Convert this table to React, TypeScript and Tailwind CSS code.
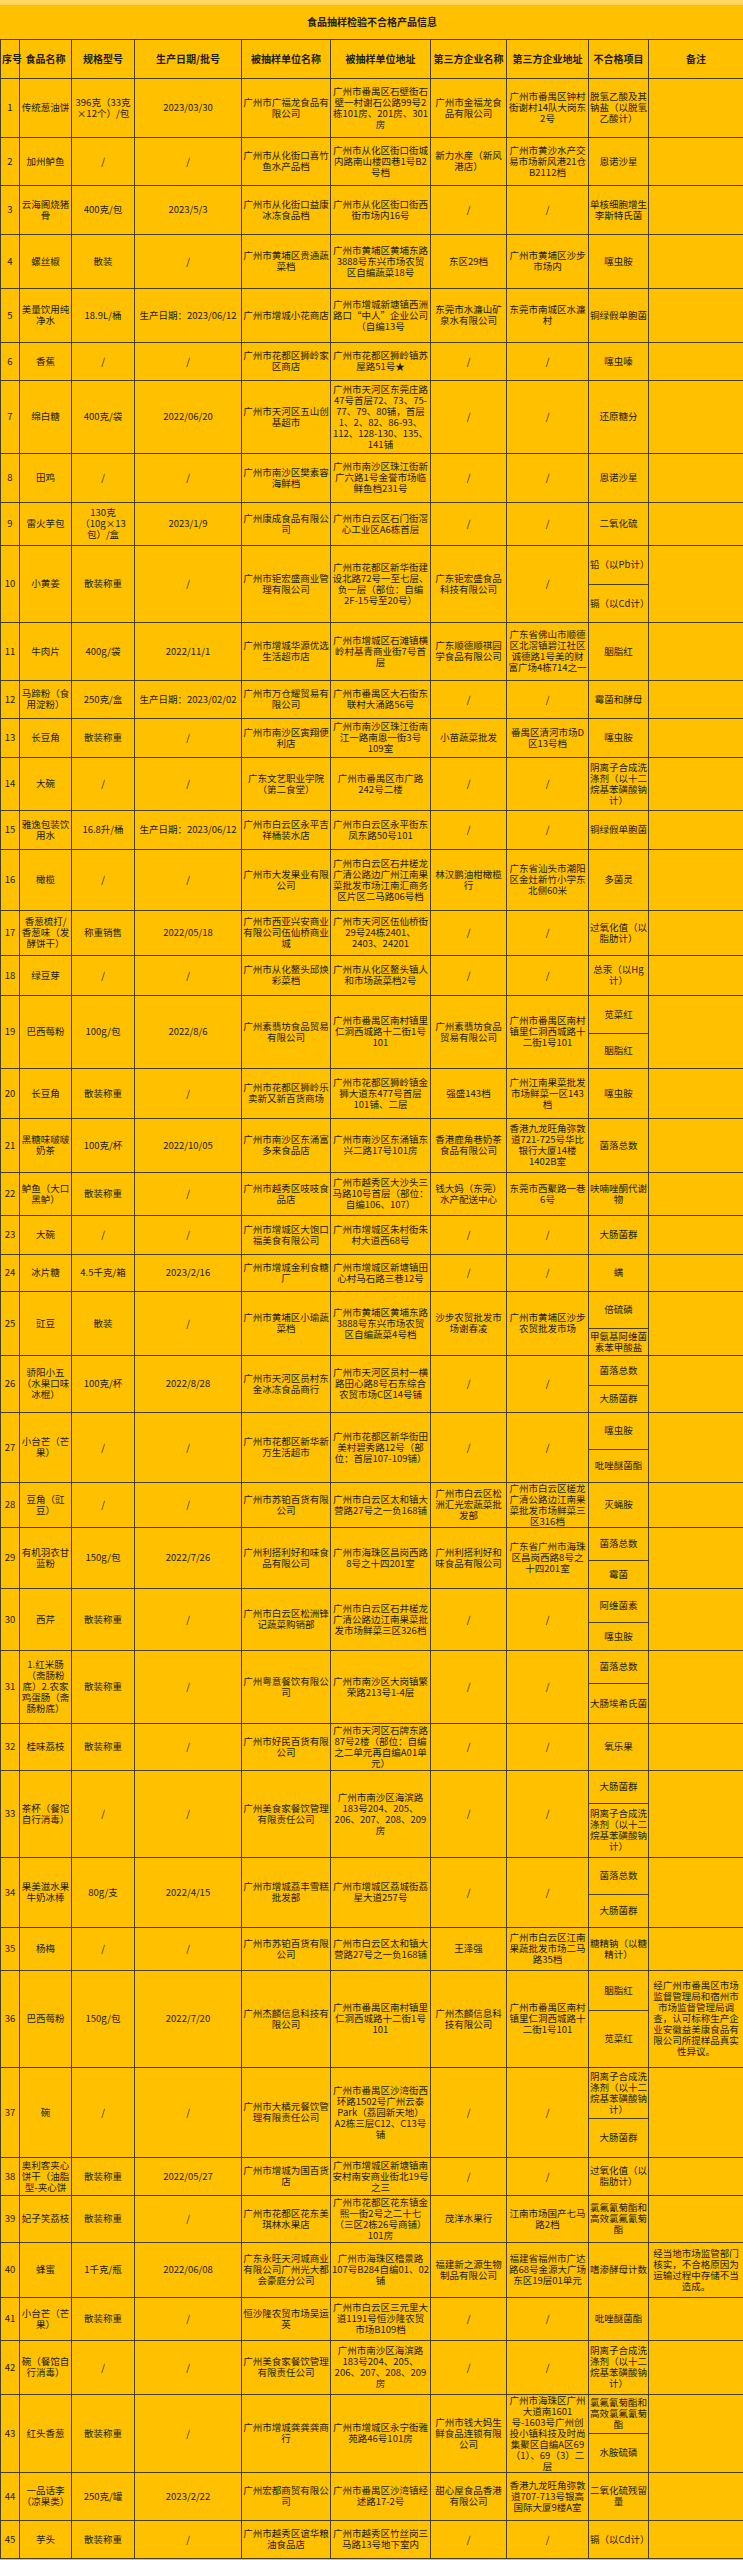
type Row = {
  no: number;
  name: string;
  spec: string;
  date: string;
  unit: string;
  addr: string;
  tp: string;
  tpAddr: string;
  items: string[];
  h: string[];
  note?: string;
};

const rows: Row[] = [
  { no: 1, name: "传统葱油饼", spec: "396克（33克×12个）/包", date: "2023/03/30", unit: "广州市广福龙食品有限公司", addr: "广州市番禺区石壁街石壁一村谢石公路99号2栋101房、201房、301房", tp: "广州市金福龙食品有限公司", tpAddr: "广州市番禺区钟村街谢村14队大岗东2号", items: ["脱氢乙酸及其钠盐（以脱氢乙酸计）"], h: ["h-[59px]"] },
  { no: 2, name: "加州鲈鱼", spec: "/", date: "/", unit: "广州市从化街口喜竹鱼水产品档", addr: "广州市从化区街口街城内路南山楼四巷1号B2号档", tp: "新力水産（新风港店）", tpAddr: "广州市黄沙水产交易市场新风港21仓B2112档", items: ["恩诺沙星"], h: ["h-[48px]"] },
  { no: 3, name: "云海阁烧猪骨", spec: "400克/包", date: "2023/5/3", unit: "广州市从化街口益康冰冻食品档", addr: "广州市从化区街口街西街市场内16号", tp: "/", tpAddr: "/", items: ["单核细胞增生李斯特氏菌"], h: ["h-[49px]"] },
  { no: 4, name: "螺丝椒", spec: "散装", date: "/", unit: "广州市黄埔区贵通蔬菜档", addr: "广州市黄埔区黄埔东路3888号东兴市场农贸区自编蔬菜18号", tp: "东区29档", tpAddr: "广州市黄埔区沙步市场内", items: ["噻虫胺"], h: ["h-[54px]"] },
  { no: 5, name: "美量饮用纯净水", spec: "18.9L/桶", date: "生产日期：2023/06/12", unit: "广州市增城小花商店", addr: "广州市增城新塘镇西洲路口“中人”企业公司（自编13号", tp: "东莞市水濂山矿泉水有限公司", tpAddr: "东莞市南城区水濂村", items: ["铜绿假单胞菌"], h: ["h-[54px]"] },
  { no: 6, name: "香蕉", spec: "/", date: "/", unit: "广州市花都区狮岭家区商店", addr: "广州市花都区狮岭镇苏屋路51号★", tp: "/", tpAddr: "/", items: ["噻虫嗪"], h: ["h-[38px]"] },
  { no: 7, name: "绵白糖", spec: "400克/袋", date: "2022/06/20", unit: "广州市天河区五山创基超市", addr: "广州市天河区东莞庄路47号首层72、73、75-77、79、80铺，首层1、2、82、86-93、112、128-130、135、141铺", tp: "/", tpAddr: "/", items: ["还原糖分"], h: ["h-[73px]"] },
  { no: 8, name: "田鸡", spec: "/", date: "/", unit: "广州市南沙区樊素容海鲜档", addr: "广州市南沙区珠江街新广六路1号金誉市场临鲜鱼档231号", tp: "/", tpAddr: "/", items: ["恩诺沙星"], h: ["h-[49px]"] },
  { no: 9, name: "雷火芋包", spec: "130克（10g×13包）/盒", date: "2023/1/9", unit: "广州康成食品有限公司", addr: "广州市白云区石门街滘心工业区A6栋首层", tp: "/", tpAddr: "/", items: ["二氧化硫"], h: ["h-[43px]"] },
  { no: 10, name: "小黄姜", spec: "散装称重", date: "/", unit: "广州市钜宏盛商业管理有限公司", addr: "广州市花都区新华街建设北路72号一至七层、负一层（部位：自编2F-15号至20号）", tp: "广东钜宏盛食品科技有限公司", tpAddr: "/", items: ["铅（以Pb计）", "镉（以Cd计）"], h: ["h-[39px]", "h-[38px]"] },
  { no: 11, name: "牛肉片", spec: "400g/袋", date: "2022/11/1", unit: "广州市增城华源优选生活超市店", addr: "广州市增城区石滩镇横岭村基青商业街7号首层", tp: "广东顺德顺祺园学食品有限公司", tpAddr: "广东省佛山市顺德区北滘镇碧江社区诚德路1号美的财富广场4栋714之一", items: ["胭脂红"], h: ["h-[58px]"] },
  { no: 12, name: "马蹄粉（食用淀粉）", spec: "250克/盒", date: "生产日期：2023/02/02", unit: "广州市万仓耀贸易有限公司", addr: "广州市番禺区大石街东联村大涌路56号", tp: "/", tpAddr: "/", items: ["霉菌和酵母"], h: ["h-[38px]"] },
  { no: 13, name: "长豆角", spec: "散装称重", date: "/", unit: "广州市南沙区寅翔便利店", addr: "广州市南沙区珠江街南江一路南恩一街3号109室", tp: "小苗蔬菜批发", tpAddr: "番禺区清河市场D区13号档", items: ["噻虫胺"], h: ["h-[39px]"] },
  { no: 14, name: "大碗", spec: "/", date: "/", unit: "广东文艺职业学院（第二食堂）", addr: "广州市番禺区市广路242号二楼", tp: "/", tpAddr: "/", items: ["阴离子合成洗涤剂（以十二烷基苯磺酸钠计）"], h: ["h-[53px]"] },
  { no: 15, name: "雅逸包装饮用水", spec: "16.8升/桶", date: "生产日期：2023/06/12", unit: "广州市白云区永平吉祥桶装水店", addr: "广州市白云区永平街东凤东路50号101", tp: "/", tpAddr: "/", items: ["铜绿假单胞菌"], h: ["h-[39px]"] },
  { no: 16, name: "橄榄", spec: "/", date: "/", unit: "广州市大发果业有限公司", addr: "广州市白云区石井槎龙广清公路边广州江南果菜批发市场江南汇商务区片区二马路06号档", tp: "林汉鹏油柑橄榄行", tpAddr: "广东省汕头市潮阳区金灶新竹小学东北侧60米", items: ["多菌灵"], h: ["h-[61px]"] },
  { no: 17, name: "香葱梳打/香葱味（发酵饼干）", spec: "称重销售", date: "2022/05/18", unit: "广州市西亚兴安商业有限公司伍仙桥商业城", addr: "广州市天河区伍仙桥街29号24栋2401、2403、24201", tp: "/", tpAddr: "/", items: ["过氧化值（以脂肪计）"], h: ["h-[45px]"] },
  { no: 18, name: "绿豆芽", spec: "/", date: "/", unit: "广州市从化鳌头邱焕彩菜档", addr: "广州市从化区鳌头镇人和市场蔬菜档2号", tp: "/", tpAddr: "/", items: ["总汞（以Hg计）"], h: ["h-[40px]"] },
  { no: 19, name: "巴西莓粉", spec: "100g/包", date: "2022/8/6", unit: "广州素翡坊食品贸易有限公司", addr: "广州市番禺区南村镇里仁洞西城路十二街1号101", tp: "广州素翡坊食品贸易有限公司", tpAddr: "广州市番禺区南村镇里仁洞西城路十二街1号101", items: ["苋菜红", "胭脂红"], h: ["h-[38px]", "h-[35px]"] },
  { no: 20, name: "长豆角", spec: "散装称重", date: "/", unit: "广州市花都区狮岭乐卖新又新百货商场", addr: "广州市花都区狮岭镇金狮大道东477号首层101铺、二层", tp: "强盛143档", tpAddr: "广州江南果菜批发市场鲜菜一区143档", items: ["噻虫胺"], h: ["h-[50px]"] },
  { no: 21, name: "黑糖味啵啵奶茶", spec: "100克/杯", date: "2022/10/05", unit: "广州市南沙区东涌富多来食品店", addr: "广州市南沙区东涌镇东兴二路17号101房", tp: "香港鹿角巷奶茶食品有限公司", tpAddr: "香港九龙旺角弥敦道721-725号华比银行大厦14楼1402B室", items: ["菌落总数"], h: ["h-[54px]"] },
  { no: 22, name: "鲈鱼（大口黑鲈）", spec: "散装称重", date: "/", unit: "广州市越秀区吱吱食品店", addr: "广州市越秀区大沙头三马路10号首层（部位：自编106、107）", tp: "钱大妈（东莞）水产配送中心", tpAddr: "东莞市西聚路一巷6号", items: ["呋喃唑酮代谢物"], h: ["h-[43px]"] },
  { no: 23, name: "大碗", spec: "/", date: "/", unit: "广州市增城区大饱口福美食有限公司", addr: "广州市增城区朱村街朱村大道西68号", tp: "/", tpAddr: "/", items: ["大肠菌群"], h: ["h-[39px]"] },
  { no: 24, name: "冰片糖", spec: "4.5千克/箱", date: "2023/2/16", unit: "广州市增城金利食糖厂", addr: "广州市增城区新塘镇田心村马石路三巷12号", tp: "/", tpAddr: "/", items: ["螨"], h: ["h-[37px]"] },
  { no: 25, name: "豇豆", spec: "散装", date: "/", unit: "广州市黄埔区小瑜蔬菜档", addr: "广州市黄埔区黄埔东路3888号东兴市场农贸区自编蔬菜4号档", tp: "沙步农贸批发市场谢春凌", tpAddr: "广州市黄埔区沙步农贸批发市场", items: ["倍硫磷", "甲氨基阿维菌素苯甲酸盐"], h: ["h-[37px]", "h-[27px]"] },
  { no: 26, name: "骄阳小五（水果口味冰棍）", spec: "100克/杯", date: "2022/8/28", unit: "广州市天河区员村东金冰冻食品商行", addr: "广州市天河区员村一横路田心路8号石东综合农贸市场C区14号铺", tp: "/", tpAddr: "/", items: ["菌落总数", "大肠菌群"], h: ["h-[30px]", "h-[27px]"] },
  { no: 27, name: "小台芒（芒果）", spec: "/", date: "/", unit: "广州市花都区新华新万生活超市", addr: "广州市花都区新华街田美村碧秀路12号（部位：首层107-109铺）", tp: "/", tpAddr: "/", items: ["噻虫胺", "吡唑醚菌酯"], h: ["h-[37px]", "h-[33px]"] },
  { no: 28, name: "豆角（豇豆）", spec: "/", date: "/", unit: "广州市苏铂百货有限公司", addr: "广州市白云区太和镇大营路27号之一负168铺", tp: "广州市白云区松洲汇光宏蔬菜批发部", tpAddr: "广州市白云区槎龙广清公路边江南果菜批发市场鲜菜三区316档", items: ["灭蝇胺"], h: ["h-[45px]"] },
  { no: 29, name: "有机羽衣甘蓝粉", spec: "150g/包", date: "2022/7/26", unit: "广州利搭利好和味食品有限公司", addr: "广州市海珠区昌岗西路8号之十四201室", tp: "广州利搭利好和味食品有限公司", tpAddr: "广东省广州市海珠区昌岗西路8号之十四201室", items: ["菌落总数", "霉菌"], h: ["h-[33px]", "h-[28px]"] },
  { no: 30, name: "西芹", spec: "散装称重", date: "/", unit: "广州市白云区松洲锋记蔬菜购销部", addr: "广州市白云区石井槎龙广清公路边江南果菜批发市场鲜菜三区326档", tp: "/", tpAddr: "/", items: ["阿维菌素", "噻虫胺"], h: ["h-[34px]", "h-[28px]"] },
  { no: 31, name: "1.红米肠（斋肠粉底）2.农家鸡蛋肠（斋肠粉底）", spec: "散装称重", date: "/", unit: "广州粤意餐饮有限公司", addr: "广州市南沙区大岗镇繁荣路213号1-4层", tp: "/", tpAddr: "/", items: ["菌落总数", "大肠埃希氏菌"], h: ["h-[33px]", "h-[40px]"] },
  { no: 32, name: "桂味荔枝", spec: "散装称重", date: "/", unit: "广州市好民百货有限公司", addr: "广州市天河区石牌东路87号2楼（部位：自编之二单元再自编A01单元）", tp: "/", tpAddr: "/", items: ["氧乐果"], h: ["h-[47px]"] },
  { no: 33, name: "茶杯（餐馆自行消毒）", spec: "/", date: "/", unit: "广州美食家餐饮管理有限责任公司", addr: "广州市南沙区海滨路183号204、205、206、207、208、209房", tp: "/", tpAddr: "/", items: ["大肠菌群", "阴离子合成洗涤剂（以十二烷基苯磺酸钠计）"], h: ["h-[33px]", "h-[54px]"] },
  { no: 34, name: "果美滋水果牛奶冰棒", spec: "80g/支", date: "2022/4/15", unit: "广州市增城荔丰雪糕批发部", addr: "广州市增城区荔城街荔星大道257号", tp: "/", tpAddr: "/", items: ["菌落总数", "大肠菌群"], h: ["h-[37px]", "h-[33px]"] },
  { no: 35, name: "杨梅", spec: "/", date: "/", unit: "广州市苏铂百货有限公司", addr: "广州市白云区太和镇大营路27号之一负168铺", tp: "王泽强", tpAddr: "广州市白云区江南果蔬批发市场二马路35档", items: ["糖精钠（以糖精计）"], h: ["h-[43px]"] },
  { no: 36, name: "巴西莓粉", spec: "150g/包", date: "2022/7/20", unit: "广州杰麟信息科技有限公司", addr: "广州市番禺区南村镇里仁洞西城路十二街1号101", tp: "广州杰麟信息科技有限公司", tpAddr: "广州市番禺区南村镇里仁洞西城路十二街1号101", items: ["胭脂红", "苋菜红"], h: ["h-[40px]", "h-[57px]"], note: "经广州市番禺区市场监督管理局和宿州市市场监督管理局调查，认可标称生产企业安徽益美康食品有限公司所提样品真实性异议。" },
  { no: 37, name: "碗", spec: "/", date: "/", unit: "广州市大橘元餐饮管理有限责任公司", addr: "广州市番禺区沙湾街西环路1502号广州云泰Park（荔园新天地）A2栋三层C12、C13号铺", tp: "/", tpAddr: "/", items: ["阴离子合成洗涤剂（以十二烷基苯磺酸钠计）", "大肠菌群"], h: ["h-[51px]", "h-[39px]"] },
  { no: 38, name: "奥利客夹心饼干（油脂型-夹心饼", spec: "散装称重", date: "2022/05/27", unit: "广州市增城为国百货店", addr: "广州市增城区新塘镇南安村南安商业街北19号之三", tp: "/", tpAddr: "/", items: ["过氧化值（以脂肪计）"], h: ["h-[38px]"] },
  { no: 39, name: "妃子笑荔枝", spec: "散装称重", date: "/", unit: "广州市花都区花东美琪林水果店", addr: "广州市花都区花东镇金熙一街2号之二十七（三区2栋26号商铺）101房", tp: "茂洋水果行", tpAddr: "江南市场国产七马路2档", items: ["氯氟氰菊酯和高效氯氟氰菊酯"], h: ["h-[47px]"] },
  { no: 40, name: "蜂蜜", spec: "1千克/瓶", date: "2022/06/08", unit: "广东永旺天河城商业有限公司广州光大都会豪庭分公司", addr: "广州市海珠区稽景路107号B284自编01、02铺", tp: "福建新之源生物制品有限公司", tpAddr: "福建省福州市广达路68号金源大广场东区19层01单元", items: ["嗜渗酵母计数"], h: ["h-[55px]"], note: "经当地市场监管部门核实，不合格原因为运输过程中存储不当造成。" },
  { no: 41, name: "小台芒（芒果）", spec: "散装称重", date: "/", unit: "恒沙隆农贸市场吴运英", addr: "广州市白云区三元里大道1191号恒沙隆农贸市场B109档", tp: "/", tpAddr: "/", items: ["吡唑醚菌酯"], h: ["h-[43px]"] },
  { no: 42, name: "碗（餐馆自行消毒）", spec: "/", date: "/", unit: "广州美食家餐饮管理有限责任公司", addr: "广州市南沙区海滨路183号204、205、206、207、208、209房", tp: "/", tpAddr: "/", items: ["阴离子合成洗涤剂（以十二烷基苯磺酸钠计）"], h: ["h-[54px]"] },
  { no: 43, name: "红头香葱", spec: "散装称重", date: "/", unit: "广州市增城龚龚龚商行", addr: "广州市增城区永宁街雅苑路46号101房", tp: "广州市钱大妈生鲜食品连锁有限公司", tpAddr: "广州市海珠区广州大道南1601号-1603号广州创投小镇科技及时尚集聚区自编A区69（1）、69（3）二层", items: ["氯氟氰菊酯和高效氯氟氰菊酯", "水胺硫磷"], h: ["h-[39px]", "h-[38px]"] },
  { no: 44, name: "一品话李（凉果类）", spec: "250克/罐", date: "2023/2/22", unit: "广州宏都商贸有限公司", addr: "广州市番禺区沙湾镇经述路17-2号", tp: "甜心屋食品香港有限公司", tpAddr: "香港九龙旺角弥敦道707-713号银高国际大厦9楼A室", items: ["二氧化硫残留量"], h: ["h-[48px]"] },
  { no: 45, name: "芋头", spec: "散装称重", date: "/", unit: "广州市越秀区谊华粮油食品店", addr: "广州市越秀区竹丝岗三马路13号地下室内", tp: "/", tpAddr: "/", items: ["镉（以Cd计）"], h: ["h-[38px]"] },
];

const headers = ["序号", "食品名称", "规格型号", "生产日期/批号", "被抽样单位名称", "被抽样单位地址", "第三方企业名称", "第三方企业地址", "不合格项目", "备注"];

const cell = "border border-[#4a3f1c] px-px text-center align-middle";

function TableRow({ row }: { row: Row }) {
  const span = row.items.length;
  return (
    <>
      <tr className={row.h[0]}>
        <td rowSpan={span} className={cell}>{row.no}</td>
        <td rowSpan={span} className={cell}>{row.name}</td>
        <td rowSpan={span} className={cell}>{row.spec}</td>
        <td rowSpan={span} className={cell}>{row.date}</td>
        <td rowSpan={span} className={cell}>{row.unit}</td>
        <td rowSpan={span} className={cell}>{row.addr}</td>
        <td rowSpan={span} className={cell}>{row.tp}</td>
        <td rowSpan={span} className={cell}>{row.tpAddr}</td>
        <td className={cell}>{row.items[0]}</td>
        <td rowSpan={span} className={cell}>{row.note}</td>
      </tr>
      {row.items.slice(1).map((item, i) => (
        <tr key={item} className={row.h[i + 1]}>
          <td className={cell}>{item}</td>
        </tr>
      ))}
    </>
  );
}

export default function App() {
  return (
    <div className="w-[743px] min-h-[2560px] bg-[#FFC000] text-[#221c0c] [font-family:'Noto_Sans_CJK_SC','Noto_Sans',sans-serif]">
      {/* light strip above the sheet */}
      <div className="h-[5px] bg-[#FFD75E]" />

      <table className="w-[743px] table-fixed border-collapse text-[9.5px] leading-[11px]">
        <colgroup>
          <col className="w-[19px]" />
          <col className="w-[52px]" />
          <col className="w-[63px]" />
          <col className="w-[107px]" />
          <col className="w-[89px]" />
          <col className="w-[100px]" />
          <col className="w-[76px]" />
          <col className="w-[82px]" />
          <col className="w-[60px]" />
          <col className="w-[95px]" />
        </colgroup>
        <thead>
          {/* Title */}
          <tr className="h-[34px]">
            <th colSpan={10} className="border-b border-[#4a3f1c] text-center text-[10px] font-bold">
              食品抽样检验不合格产品信息
            </th>
          </tr>
          {/* Column headers */}
          <tr className="h-[39px]">
            {headers.map((h) => (
              <th key={h} className={`${cell} whitespace-nowrap text-[10px] font-bold`}>
                {h}
              </th>
            ))}
          </tr>
        </thead>
        <tbody>
          {rows.map((row) => (
            <TableRow key={row.no} row={row} />
          ))}
        </tbody>
      </table>
    </div>
  );
}
